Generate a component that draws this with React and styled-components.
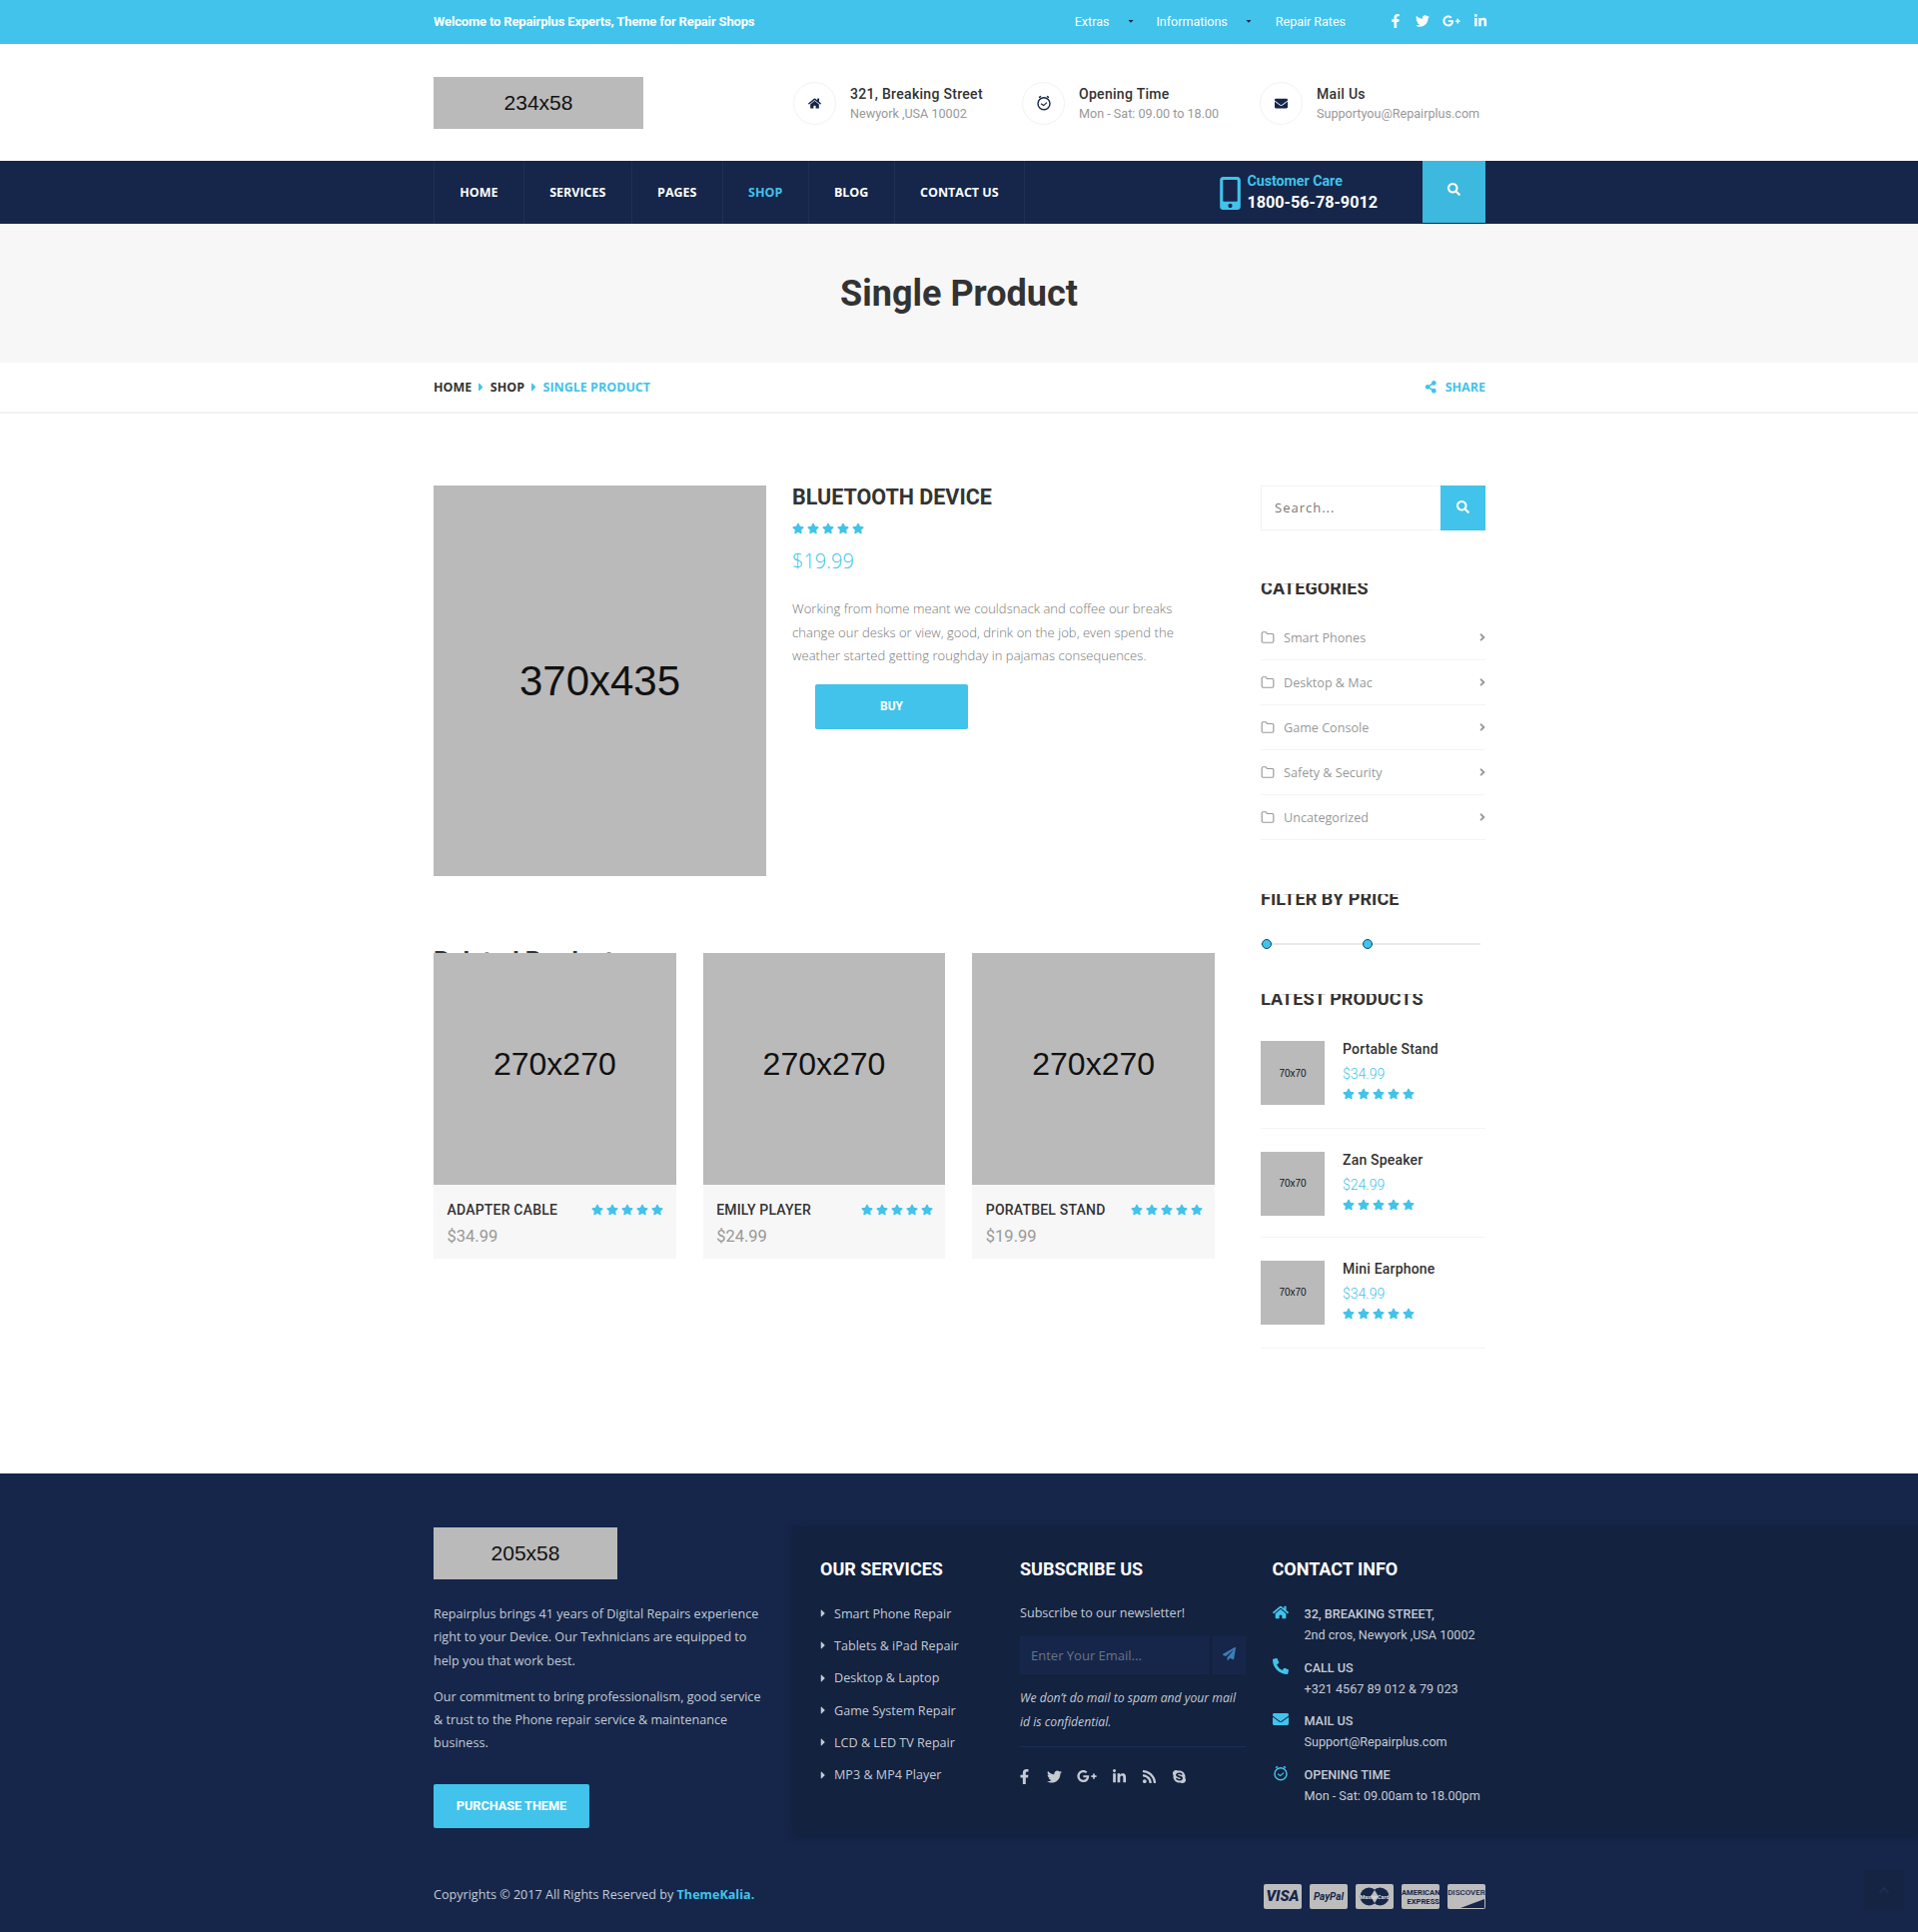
import React from "react";
import styled, { createGlobalStyle } from "styled-components";
import {
    FaHome,
    FaEnvelope,
    FaFacebookF,
    FaTwitter,
    FaGooglePlusG,
    FaLinkedinIn,
    FaSearch,
    FaShareAlt,
    FaStar,
    FaAngleRight,
    FaCaretRight,
    FaCaretDown,
    FaMobileAlt,
    FaPhoneAlt,
    FaPaperPlane,
    FaRss,
    FaSkype,
    FaAngleUp,
} from "react-icons/fa";
import { FiFolder } from "react-icons/fi";

const CYAN = "#41c3eb";
const NAVY = "#15264a";
const ROBOTO = `Roboto, "Liberation Sans", sans-serif`;
const OPEN = `"Open Sans", "Liberation Sans", sans-serif`;

const Global = createGlobalStyle`
    * { box-sizing: border-box; }
    html, body { margin: 0; padding: 0; background: #fff; }
    body { font-family: ${OPEN}; font-size: 12.6px; color: #999; }
    a { text-decoration: none; color: inherit; }
    input::placeholder { color: inherit; opacity: 1; }
`;

const Page = styled.div`
    width: 1920px;
    height: 1934px;
    overflow: hidden;
`;

const Wrap = styled.div`
    width: 1053px;
    margin-left: 434px;
    display: flex;
    align-items: center;
    height: 100%;
`;

/* top strip */
const TopBar = styled.div`
    height: 44px;
    padding-bottom: 2px;
    background: ${CYAN};
    color: #fff;
    font-family: ${ROBOTO};
`;
const Welcome = styled.div`
    font-size: 13px;
    letter-spacing: -0.16px;
    font-weight: 700;
    flex: 1;
`;
const TopLink = styled.a`
    display: flex;
    align-items: center;
    font-size: 12.5px;
    margin-right: ${(p) => p.$gap}px;
    svg {
        color: ${NAVY};
        font-size: 8px;
        margin-left: ${(p) => p.$caret}px;
    }
`;
const TopSocial = styled.div`
    display: flex;
    align-items: center;
    gap: 13px;
    margin-left: 43px;
    margin-right: -2px;
    font-size: 14px;
    svg:nth-child(3) {
        font-size: 18px;
    }
`;

/* logo row */
const Header = styled.div`
    height: 117px;
    background: #fff;
`;
const Holder = styled.div`
    width: ${(p) => p.$w};
    height: ${(p) => p.$h};
    flex: none;
    padding-bottom: ${(p) => p.$lift ?? 0}px;
    background: #bababa;
    color: #111;
    font-family: "Liberation Sans", Arial, sans-serif;
    font-size: ${(p) => p.$size}px;
    display: flex;
    align-items: center;
    justify-content: center;
`;
const InfoList = styled.div`
    display: flex;
    margin-left: 150px;
    padding-top: 1px;
`;
const InfoItem = styled.div`
    display: flex;
    align-items: center;
    width: ${(p) => p.$w}px;
`;
const InfoCircle = styled.div`
    width: 43px;
    height: 43px;
    border: 1px solid #f2f2f2;
    border-radius: 50%;
    display: flex;
    align-items: center;
    justify-content: center;
    color: ${NAVY};
    font-size: 13px;
    margin-right: 14px;
    flex: none;
`;
const InfoBody = styled.div`
    padding-top: 1px;
`;
const InfoTitle = styled.div`
    font-family: ${ROBOTO};
    font-weight: 500;
    font-size: 14px;
    letter-spacing: 0.3px;
    color: #333;
    line-height: 20px;
`;
const InfoText = styled.div`
    font-family: ${ROBOTO};
    font-size: 12.6px;
    color: #999;
    line-height: 20px;
`;

/* nav */
const NavBar = styled.div`
    height: 63px;
    background: ${NAVY};
`;
const NavInner = styled(Wrap)`
    align-items: stretch;
`;
const NavItem = styled.a`
    display: flex;
    align-items: center;
    padding: 0 25.3px;
    border-left: 1px solid #1e3055;
    font-size: 12.5px;
    font-weight: 700;
    color: ${(p) => (p.$active ? CYAN : "#fff")};
    &:last-of-type {
        border-right: 1px solid #1e3055;
    }
`;
const Care = styled.div`
    margin-left: auto;
    display: flex;
    align-items: center;
    margin-right: 45px;
    padding-top: 2px;
    font-family: ${ROBOTO};
    svg {
        color: ${CYAN};
        font-size: 33px;
    }
`;
const CareTitle = styled.div`
    color: ${CYAN};
    font-size: 14.2px;
    font-weight: 700;
    line-height: 18px;
`;
const CareNumber = styled.div`
    color: #fff;
    font-size: 16.2px;
    font-weight: 700;
    line-height: 25px;
`;
const NavSearch = styled.button`
    width: 63px;
    height: 62px;
    border: 0;
    padding: 0 0 2px;
    background: #3db8de;
    color: #fff;
    font-size: 13px;
`;

/* title band */
const Hero = styled.div`
    height: 139px;
    background: #f7f7f7;
    display: flex;
    align-items: center;
    justify-content: center;
    font-family: ${ROBOTO};
    font-size: 36px;
    font-weight: 700;
    color: #333;
`;
const Crumbs = styled.div`
    height: 51px;
    border-bottom: 2px solid #f2f2f2;
`;
const Crumb = styled.a`
    font-size: 12.5px;
    font-weight: 700;
    color: ${(p) => (p.$active ? CYAN : "#333")};
`;
const CrumbCaret = styled(FaCaretRight)`
    color: ${CYAN};
    font-size: 13px;
    margin: 0 2.75px;
`;
const Share = styled.a`
    margin-left: auto;
    display: flex;
    align-items: center;
    gap: 8px;
    color: ${CYAN};
    font-size: 12.5px;
    font-weight: 700;
`;

/* main */
const Main = styled.div`
    height: 1061px;
    padding-top: 72px;
`;
const MainInner = styled.div`
    width: 1053px;
    margin-left: 434px;
    display: flex;
    justify-content: space-between;
`;
const Content = styled.div`
    width: 782px;
`;
const ProductRow = styled.div`
    display: flex;
    gap: 26px;
`;
const ProductInfo = styled.div`
    flex: 1;
`;
const ProductTitle = styled.h1`
    margin: 0;
    font-family: ${ROBOTO};
    font-size: 21.5px;
    font-weight: 700;
    line-height: 24px;
    color: #333;
`;
const Stars = styled.div`
    display: flex;
    gap: 3px;
    color: ${CYAN};
    font-size: 12px;
`;
const ProductStars = styled(Stars)`
    margin-top: 13px;
`;
const ProductPrice = styled.div`
    font-size: 20px;
    font-weight: 300;
    color: ${CYAN};
    line-height: 28px;
    margin-top: 13px;
`;
const ProductText = styled.p`
    margin: 22px 0 0;
    width: 400px;
    font-size: 13px;
    font-weight: 300;
    letter-spacing: 0.05px;
    line-height: 23.5px;
    color: #777;
`;
const BuyButton = styled.button`
    display: block;
    width: 153px;
    height: 45px;
    margin: 16px 0 0 23px;
    border: 0;
    border-radius: 2px;
    background: ${CYAN};
    color: #fff;
    font-family: ${ROBOTO};
    font-size: 12px;
    font-weight: 700;
`;
const RelatedTitle = styled.h2`
    margin: 73px 0 0;
    height: 4px;
    overflow: hidden;
    font-family: ${ROBOTO};
    font-size: 25px;
    font-weight: 700;
    line-height: 25px;
    color: #333;
`;
const CardGrid = styled.div`
    display: grid;
    grid-template-columns: repeat(3, 1fr);
    gap: 27px;
`;
const Card = styled.div`
    background: #f7f7f7;
    height: 306px;
`;
const CardBody = styled.div`
    padding: 14px 12.5px 0 13.5px;
    display: flex;
    flex-wrap: wrap;
    align-items: center;
    justify-content: space-between;
`;
const CardTitle = styled.div`
    font-family: ${ROBOTO};
    font-size: 14px;
    font-weight: 500;
    letter-spacing: 0.2px;
    color: #333;
    line-height: 22px;
`;
const CardPrice = styled.div`
    width: 100%;
    font-family: ${ROBOTO};
    font-size: 16.5px;
    color: #999;
    line-height: 22px;
    margin-top: 5px;
`;

/* sidebar */
const Side = styled.aside`
    width: 225px;
`;
const SearchBox = styled.div`
    display: flex;
    height: 45px;
    border: 1px solid #f2f2f2;
    border-right: 0;
`;
const SearchInput = styled.input`
    flex: 1;
    min-width: 0;
    border: 0;
    outline: 0;
    padding: 0 13px 2px;
    font-family: ${OPEN};
    font-size: 13px;
    letter-spacing: 1px;
    color: #777;
`;
const SearchButton = styled.button`
    width: 45px;
    margin: -1px 0;
    border: 0;
    background: ${CYAN};
    color: #fff;
    font-size: 13px;
`;
const SideTitle = styled.h4`
    margin: ${(p) => p.$top}px 0 0;
    height: 13px;
    overflow: hidden;
    font-family: ${ROBOTO};
    font-size: 18px;
    font-weight: 700;
    line-height: 9px;
    letter-spacing: 0.1px;
    color: #333;
`;
const CatList = styled.ul`
    margin: 19px 0 0;
    padding: 0;
    list-style: none;
`;
const CatRow = styled.li`
    display: flex;
    align-items: center;
    height: 45px;
    border-bottom: 1px solid #f4f4f4;
    font-size: 12.6px;
    color: #999;
`;
const CatFolder = styled(FiFolder)`
    font-size: 14px;
    margin-right: 9px;
    color: #999;
`;
const CatArrow = styled(FaAngleRight)`
    margin-left: auto;
    margin-right: -3px;
    font-size: 12px;
    color: #999;
`;
const Slider = styled.div`
    position: relative;
    width: 220px;
    height: 2px;
    background: #e8e8e8;
    margin-top: 36px;
`;
const Knob = styled.span`
    position: absolute;
    top: -4px;
    left: ${(p) => p.$left}px;
    width: 10px;
    height: 10px;
    border-radius: 50%;
    border: 1px solid #0d4a6b;
    background: ${CYAN};
`;
const LatestList = styled.div`
    margin-top: 34px;
`;
const Latest = styled.div`
    display: flex;
    gap: 18px;
    height: ${(p) => p.$h}px;
    padding-top: ${(p) => p.$pad}px;
    border-bottom: 1px solid #f4f4f4;
`;
const LatestTitle = styled.div`
    font-family: ${ROBOTO};
    font-size: 14px;
    font-weight: 500;
    letter-spacing: 0.2px;
    color: #333;
    line-height: 16px;
`;
const LatestPrice = styled.div`
    font-family: ${ROBOTO};
    font-size: 14px;
    font-weight: 300;
    color: ${CYAN};
    line-height: 18px;
    margin-top: 8px;
`;
const LatestStars = styled(Stars)`
    margin-top: 5px;
`;

/* footer */
const Footer = styled.footer`
    position: relative;
    height: 459px;
    background: ${NAVY};
    color: #c5cad3;
`;
const FooterTop = styled.div`
    display: flex;
    height: 361px;
    padding: 54px 0 0 434px;
`;
const FooterAbout = styled.div`
    width: 360px;
    flex: none;
`;
const FooterText = styled.p`
    margin: ${(p) => p.$top}px 0 0;
    width: 335px;
    font-size: 12.6px;
    line-height: 23.3px;
`;
const PurchaseButton = styled.button`
    display: block;
    width: 156px;
    height: 44px;
    margin-top: 29px;
    border: 0;
    border-radius: 2px;
    background: ${CYAN};
    color: #fff;
    font-family: ${ROBOTO};
    font-size: 12.7px;
    font-weight: 700;
`;
const Panel = styled.div`
    flex: 1;
    height: 308px;
    margin-top: -1px;
    padding: 32px 0 0 27px;
    background: #13223f;
    box-shadow: 0 3px 8px rgba(10, 20, 40, 0.35);
    display: grid;
    grid-template-columns: 200px 252.5px 1fr;
`;
const FooterHead = styled.h3`
    margin: 0 0 17px;
    font-family: ${ROBOTO};
    font-size: 18px;
    font-weight: 700;
    line-height: 22px;
    color: #fff;
`;
const ServiceList = styled.ul`
    margin: 0;
    padding: 0;
    list-style: none;
`;
const ServiceRow = styled.li`
    display: flex;
    align-items: center;
    height: 32.3px;
    svg {
        font-size: 12px;
        margin: 0 5px 0 -3px;
    }
`;
const SubscribeCol = styled.div`
    width: 226px;
`;
const SubscribeText = styled.div`
    line-height: 32px;
`;
const SubscribeForm = styled.div`
    display: flex;
    gap: 4px;
    height: 38px;
    margin-top: 7px;
`;
const EmailInput = styled.input`
    width: 189px;
    border: 1px solid #15284d;
    outline: 0;
    background: #15264a;
    padding: 0 10px;
    font-family: ${OPEN};
    font-size: 13px;
    color: #6b7484;
`;
const SendButton = styled.button`
    width: 33px;
    border: 1px solid #15284d;
    background: #15264a;
    padding: 0;
    color: #3d7fb5;
    font-size: 13px;
`;
const Confidential = styled.p`
    margin: 12px 0 0;
    padding-bottom: 13px;
    border-bottom: 1px solid #1b2e57;
    font-style: italic;
    font-size: 12.2px;
    line-height: 23.5px;
`;
const SocialRow = styled.div`
    display: flex;
    align-items: center;
    margin: 19px 0 0 -3px;
    font-size: 15px;
    svg {
        margin-right: 15px;
    }
    svg:nth-child(3) {
        font-size: 20px;
    }
`;
const ContactList = styled.div`
    padding-top: 6px;
`;
const ContactRow = styled.div`
    display: flex;
    height: 53.5px;
    font-family: ${ROBOTO};
    font-size: 12.6px;
    line-height: 21px;
`;
const ContactIcon = styled.div`
    width: 32px;
    flex: none;
    color: ${CYAN};
    font-size: 16px;
    padding-top: 1px;
`;
const ContactTitle = styled.div`
    font-weight: 500;
    text-transform: uppercase;
`;
const FooterBottom = styled.div`
    width: 1053px;
    margin: 50px 0 0 434px;
    display: flex;
    align-items: center;
    justify-content: space-between;
`;
const Copy = styled.div`
    margin-bottom: 5px;
`;
const Brand = styled.a`
    color: ${CYAN};
    font-weight: 700;
`;
const PayList = styled.div`
    display: flex;
    gap: 8px;
`;
const PayCard = styled.div`
    position: relative;
    width: 38px;
    height: 25px;
    padding-bottom: ${(p) => p.$lift ?? 0}px;
    overflow: hidden;
    border-radius: 2px;
    background: #bdbdbd;
    color: ${NAVY};
    display: flex;
    flex-direction: column;
    align-items: center;
    justify-content: center;
    font-family: ${ROBOTO};
    font-size: ${(p) => p.$size}px;
    font-weight: ${(p) => p.$weight};
    font-style: ${(p) => (p.$italic ? "italic" : "normal")};
    line-height: 1;
    white-space: nowrap;
`;
const AmexLine = styled.span`
    align-self: ${(p) => p.$side};
    line-height: 9px;
`;
const DiscoverCorner = styled.span`
    position: absolute;
    right: 1px;
    bottom: 1px;
    width: 24px;
    height: 9px;
    background: ${NAVY};
    clip-path: polygon(100% 0, 100% 100%, 0 100%);
`;
const ToTop = styled.div`
    position: absolute;
    right: 14px;
    bottom: 22px;
    width: 40px;
    height: 41px;
    background: #152443;
    color: #1a2c50;
    display: flex;
    align-items: center;
    justify-content: center;
    font-size: 16px;
`;

const ClockIcon = ({ size = 16 }) => (
    <svg width={size} height={size} viewBox="0 0 16 16" fill="none" stroke="currentColor">
        <circle cx="8" cy="8.8" r="6" strokeWidth="1.4" />
        <path d="M5 8.8 L7.6 10.6 L11 7.6" strokeWidth="1.2" />
        <path d="M3 2.6 L5 1.4 M13 2.6 L11 1.4" strokeWidth="1.4" />
    </svg>
);

const FiveStars = ({ as: Row = Stars, ...rest }) => (
    <Row {...rest}>
        {[0, 1, 2, 3, 4].map((i) => (
            <FaStar key={i} />
        ))}
    </Row>
);

const MasterMark = () => (
    <svg width="30" height="19" viewBox="0 0 30 19">
        <circle cx="9.5" cy="9.5" r="9" fill={NAVY} />
        <circle cx="20.5" cy="9.5" r="9" fill={NAVY} />
        <path d="M15 3 L19 9.5 L15 16 L11 9.5 Z" fill="#bdbdbd" />
        <text x="15" y="11.5" textAnchor="middle" fontSize="5.5" fontWeight="700" fill="#dcdcdc" fontFamily="Roboto, sans-serif">
            MasterCard
        </text>
    </svg>
);

const CATEGORIES = ["Smart Phones", "Desktop & Mac", "Game Console", "Safety & Security", "Uncategorized"];
const RELATED = [
    ["ADAPTER CABLE", "$34.99"],
    ["EMILY PLAYER", "$24.99"],
    ["PORATBEL STAND", "$19.99"],
];
const LATEST = [
    ["Portable Stand", "$34.99", 88, 0],
    ["Zan Speaker", "$24.99", 109, 22.5],
    ["Mini Earphone", "$34.99", 110.5, 22.5],
];
const SERVICES = [
    "Smart Phone Repair",
    "Tablets & iPad Repair",
    "Desktop & Laptop",
    "Game System Repair",
    "LCD & LED TV Repair",
    "MP3 & MP4 Player",
];
const NAV = ["HOME", "SERVICES", "PAGES", "SHOP", "BLOG", "CONTACT US"];

const App = () => {
    return (
        <Page>
            <Global />
            <TopBar>
                <Wrap>
                    <Welcome>Welcome to Repairplus Experts, Theme for Repair Shops</Welcome>
                    <TopLink $gap={21} $caret={18}>Extras <FaCaretDown /></TopLink>
                    <TopLink $gap={23} $caret={17}>Informations <FaCaretDown /></TopLink>
                    <TopLink>Repair Rates</TopLink>
                    <TopSocial>
                        <FaFacebookF />
                        <FaTwitter />
                        <FaGooglePlusG />
                        <FaLinkedinIn />
                    </TopSocial>
                </Wrap>
            </TopBar>

            <Header>
                <Wrap>
                    <Holder $w="210px" $h="52px" $size={21}>234x58</Holder>
                    <InfoList>
                        <InfoItem $w={229}>
                            <InfoCircle><FaHome /></InfoCircle>
                            <InfoBody>
                                <InfoTitle>321, Breaking Street</InfoTitle>
                                <InfoText>Newyork ,USA 10002</InfoText>
                            </InfoBody>
                        </InfoItem>
                        <InfoItem $w={238}>
                            <InfoCircle><ClockIcon /></InfoCircle>
                            <InfoBody>
                                <InfoTitle>Opening Time</InfoTitle>
                                <InfoText>Mon - Sat: 09.00 to 18.00</InfoText>
                            </InfoBody>
                        </InfoItem>
                        <InfoItem>
                            <InfoCircle><FaEnvelope /></InfoCircle>
                            <InfoBody>
                                <InfoTitle>Mail Us</InfoTitle>
                                <InfoText>Supportyou@Repairplus.com</InfoText>
                            </InfoBody>
                        </InfoItem>
                    </InfoList>
                </Wrap>
            </Header>

            <NavBar>
                <NavInner>
                    {NAV.map((n) => (
                        <NavItem key={n} $active={n === "SHOP"}>{n}</NavItem>
                    ))}
                    <Care>
                        <FaMobileAlt />
                        <div>
                            <CareTitle>Customer Care</CareTitle>
                            <CareNumber>1800-56-78-9012</CareNumber>
                        </div>
                    </Care>
                    <NavSearch><FaSearch /></NavSearch>
                </NavInner>
            </NavBar>

            <Hero>Single Product</Hero>

            <Crumbs>
                <Wrap>
                    <Crumb>HOME</Crumb>
                    <CrumbCaret />
                    <Crumb>SHOP</Crumb>
                    <CrumbCaret />
                    <Crumb $active>SINGLE PRODUCT</Crumb>
                    <Share><FaShareAlt /> SHARE</Share>
                </Wrap>
            </Crumbs>

            <Main>
                <MainInner>
                    <Content>
                        <ProductRow>
                            <Holder $w="333px" $h="391px" $size={42}>370x435</Holder>
                            <ProductInfo>
                                <ProductTitle>BLUETOOTH DEVICE</ProductTitle>
                                <FiveStars as={ProductStars} />
                                <ProductPrice>$19.99</ProductPrice>
                                <ProductText>
                                    Working from home meant we couldsnack and coffee our breaks change our desks or view, good, drink on the job, even spend the weather started getting roughday in pajamas consequences.
                                </ProductText>
                                <BuyButton>BUY</BuyButton>
                            </ProductInfo>
                        </ProductRow>

                        <RelatedTitle>Related Products</RelatedTitle>
                        <CardGrid>
                            {RELATED.map(([name, price]) => (
                                <Card key={name}>
                                    <Holder $w="100%" $h="232px" $size={32} $lift={10}>270x270</Holder>
                                    <CardBody>
                                        <CardTitle>{name}</CardTitle>
                                        <FiveStars />
                                        <CardPrice>{price}</CardPrice>
                                    </CardBody>
                                </Card>
                            ))}
                        </CardGrid>
                    </Content>

                    <Side>
                        <SearchBox>
                            <SearchInput placeholder="Search..." />
                            <SearchButton><FaSearch /></SearchButton>
                        </SearchBox>

                        <SideTitle $top={53}>CATEGORIES</SideTitle>
                        <CatList>
                            {CATEGORIES.map((c) => (
                                <CatRow key={c}>
                                    <CatFolder />
                                    {c}
                                    <CatArrow />
                                </CatRow>
                            ))}
                        </CatList>

                        <SideTitle $top={54}>FILTER BY PRICE</SideTitle>
                        <Slider>
                            <Knob $left={1} />
                            <Knob $left={102} />
                        </Slider>

                        <SideTitle $top={49}>LATEST PRODUCTS</SideTitle>
                        <LatestList>
                            {LATEST.map(([name, price, h, pad]) => (
                                <Latest key={name} $h={h} $pad={pad}>
                                    <Holder $w="64px" $h="64px" $size={10}>70x70</Holder>
                                    <div>
                                        <LatestTitle>{name}</LatestTitle>
                                        <LatestPrice>{price}</LatestPrice>
                                        <FiveStars as={LatestStars} />
                                    </div>
                                </Latest>
                            ))}
                        </LatestList>
                    </Side>
                </MainInner>
            </Main>

            <Footer>
                <FooterTop>
                    <FooterAbout>
                        <Holder $w="184px" $h="52px" $size={21}>205x58</Holder>
                        <FooterText $top={23}>
                            Repairplus brings 41 years of Digital Repairs experience right to your Device. Our Texhnicians are equipped to help you that work best.
                        </FooterText>
                        <FooterText $top={13}>
                            Our commitment to bring professionalism, good service &amp; trust to the Phone repair service &amp; maintenance business.
                        </FooterText>
                        <PurchaseButton>PURCHASE THEME</PurchaseButton>
                    </FooterAbout>
                    <Panel>
                        <div>
                            <FooterHead>OUR SERVICES</FooterHead>
                            <ServiceList>
                                {SERVICES.map((s) => (
                                    <ServiceRow key={s}><FaCaretRight />{s}</ServiceRow>
                                ))}
                            </ServiceList>
                        </div>
                        <SubscribeCol>
                            <FooterHead>SUBSCRIBE US</FooterHead>
                            <SubscribeText>Subscribe to our newsletter!</SubscribeText>
                            <SubscribeForm>
                                <EmailInput placeholder="Enter Your Email..." />
                                <SendButton><FaPaperPlane /></SendButton>
                            </SubscribeForm>
                            <Confidential>We don’t do mail to spam and your mail id is confidential.</Confidential>
                            <SocialRow>
                                <FaFacebookF />
                                <FaTwitter />
                                <FaGooglePlusG />
                                <FaLinkedinIn />
                                <FaRss />
                                <FaSkype />
                            </SocialRow>
                        </SubscribeCol>
                        <div>
                            <FooterHead>CONTACT INFO</FooterHead>
                            <ContactList>
                                <ContactRow>
                                    <ContactIcon><FaHome /></ContactIcon>
                                    <div>
                                        <ContactTitle>32, Breaking Street,</ContactTitle>
                                        2nd cros, Newyork ,USA 10002
                                    </div>
                                </ContactRow>
                                <ContactRow>
                                    <ContactIcon><FaPhoneAlt /></ContactIcon>
                                    <div>
                                        <ContactTitle>Call Us</ContactTitle>
                                        +321 4567 89 012 &amp; 79 023
                                    </div>
                                </ContactRow>
                                <ContactRow>
                                    <ContactIcon><FaEnvelope /></ContactIcon>
                                    <div>
                                        <ContactTitle>Mail Us</ContactTitle>
                                        Support@Repairplus.com
                                    </div>
                                </ContactRow>
                                <ContactRow>
                                    <ContactIcon><ClockIcon /></ContactIcon>
                                    <div>
                                        <ContactTitle>Opening Time</ContactTitle>
                                        Mon - Sat: 09.00am to 18.00pm
                                    </div>
                                </ContactRow>
                            </ContactList>
                        </div>
                    </Panel>
                </FooterTop>
                <FooterBottom>
                    <Copy>Copyrights © 2017 All Rights Reserved by <Brand>ThemeKalia.</Brand></Copy>
                    <PayList>
                        <PayCard $size={15} $weight={900} $italic>VISA</PayCard>
                        <PayCard $size={10} $weight={700} $italic>PayPal</PayCard>
                        <PayCard><MasterMark /></PayCard>
                        <PayCard $size={7.6} $weight={700}>
                            <AmexLine $side="flex-start">AMERICAN</AmexLine>
                            <AmexLine $side="flex-end">EXPRESS</AmexLine>
                        </PayCard>
                        <PayCard $size={8} $weight={500} $lift={7}>
                            <span>DISCOVER</span>
                            <DiscoverCorner />
                        </PayCard>
                    </PayList>
                </FooterBottom>
                <ToTop><FaAngleUp /></ToTop>
            </Footer>
        </Page>
    );
};

export default App;
